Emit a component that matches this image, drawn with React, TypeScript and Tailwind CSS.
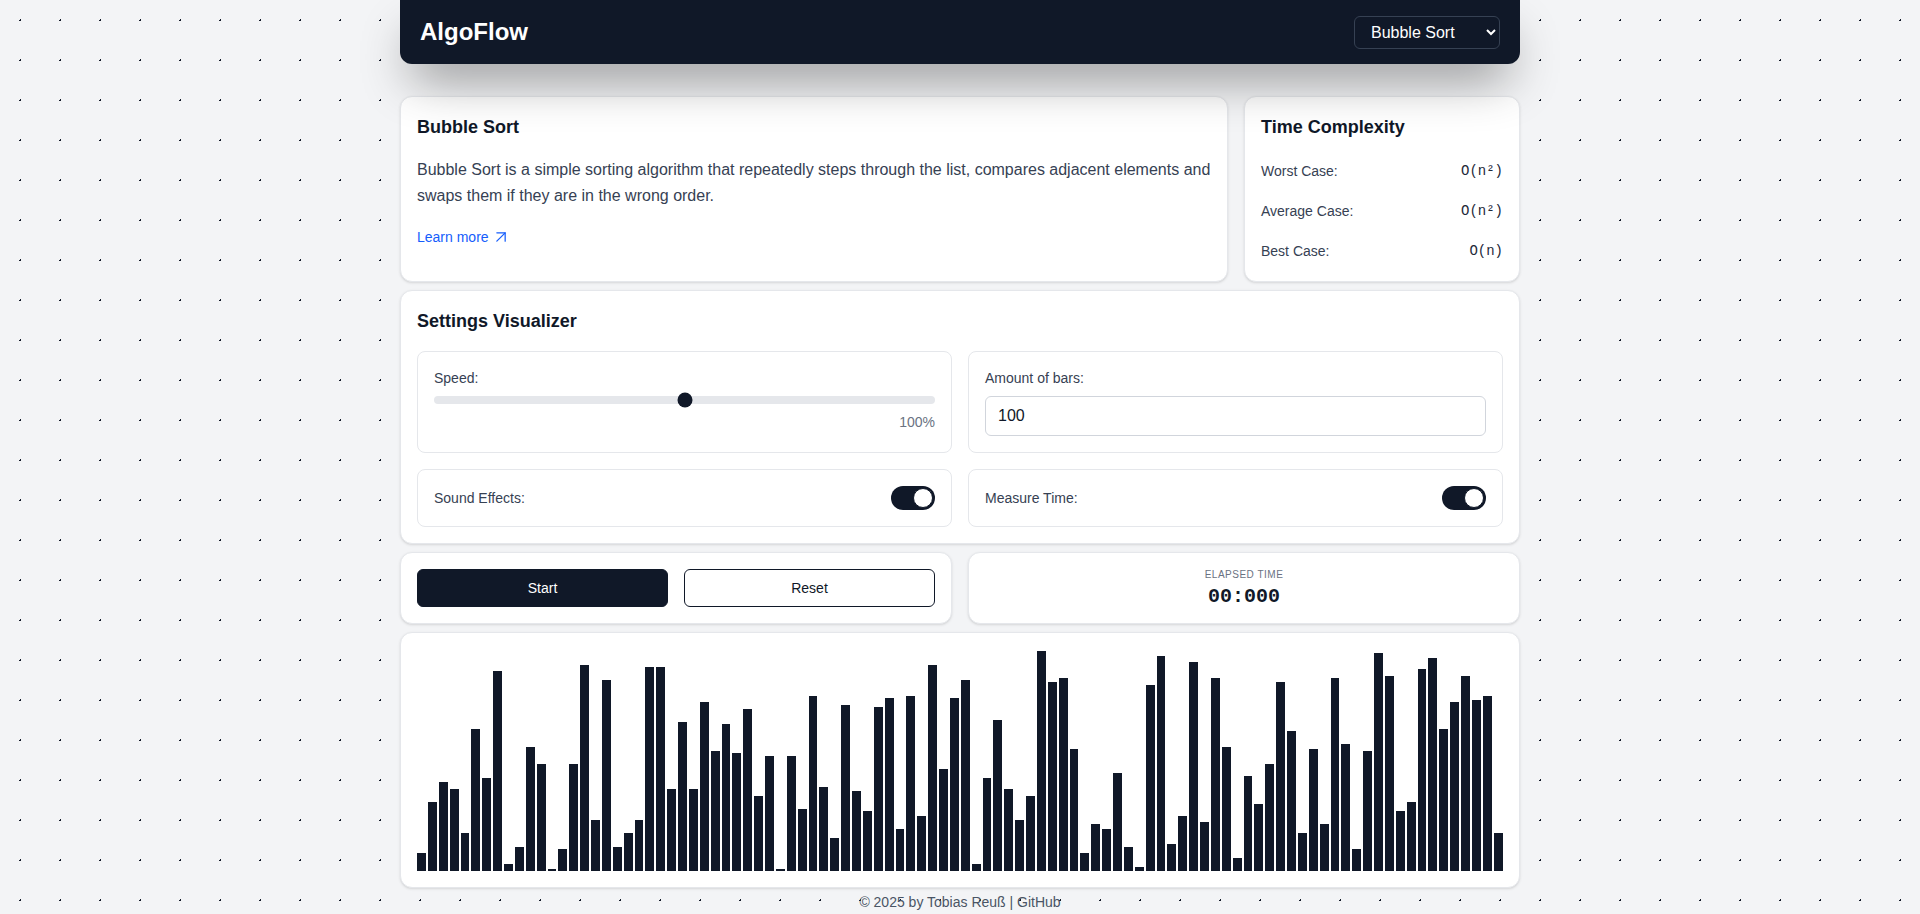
import React, { useState } from "react";
import { ArrowUpRight } from "lucide-react";

// bar heights in px, read off the current (unsorted) array
const bars: number[] = [
  18, 69, 89, 82, 38, 142, 93, 200, 7, 24, 124, 107, 2, 22, 107, 206, 51, 191, 24, 38,
  51, 204, 204, 82, 149, 82, 169, 120, 147, 118, 162, 75, 115, 2, 115, 62, 175, 84, 33, 166,
  80, 60, 164, 173, 42, 175, 55, 206, 102, 173, 191, 7, 93, 151, 82, 51, 75, 220, 189, 193,
  122, 18, 47, 42, 98, 24, 4, 186, 215, 27, 55, 209, 49, 193, 124, 13, 95, 67, 107, 189,
  140, 38, 122, 47, 193, 127, 22, 120, 218, 195, 60, 69, 202, 213, 142, 169, 195, 171, 175, 38,
];

const complexity = [
  { label: "Worst Case:", value: "O(n²)" },
  { label: "Average Case:", value: "O(n²)" },
  { label: "Best Case:", value: "O(n)" },
];

const Toggle: React.FC<{ on: boolean; onChange: () => void }> = ({ on, onChange }) => (
  <button
    onClick={onChange}
    className={`relative h-6 w-11 rounded-full transition-colors ${on ? "bg-gray-900" : "bg-gray-300"}`}
  >
    <span
      className={`absolute top-0.5 left-0.5 h-5 w-5 rounded-full border border-gray-900 bg-white transition-transform ${
        on ? "translate-x-5" : "translate-x-0"
      }`}
    />
  </button>
);

const App: React.FC = () => {
  const [algo, setAlgo] = useState("bubble");
  const [amount, setAmount] = useState("100");
  const [sound, setSound] = useState(true);
  const [measure, setMeasure] = useState(true);

  return (
    <div className="min-h-screen bg-gray-100 bg-[radial-gradient(circle_at_20.5px_20.5px,#111827_1px,transparent_1px)] bg-[length:40px_40px] font-['Liberation_Sans',Arial,sans-serif]">
      <div className="mx-auto flex max-w-6xl flex-col px-4">
        {/* Header */}
        <header className="relative z-10 flex h-16 items-center justify-between rounded-b-xl bg-gray-900 px-5 shadow-[0_25px_50px_-12px_rgba(0,0,0,0.45)]">
          <h1 className="text-2xl font-bold text-white">AlgoFlow</h1>
          <select
            value={algo}
            onChange={(e) => setAlgo(e.target.value)}
            className="w-[146px] rounded-md border border-gray-700 bg-gray-900 py-1.5 pl-3 pr-2 text-base text-white"
          >
            <option value="bubble">Bubble Sort</option>
            <option value="selection">Selection Sort</option>
            <option value="insertion">Insertion Sort</option>
            <option value="merge">Merge Sort</option>
            <option value="quick">Quick Sort</option>
          </select>
        </header>

        <main className="mt-8 flex flex-col gap-2">
          {/* Info + complexity */}
          <div className="grid grid-cols-[3fr_1fr] gap-4">
            <section className="rounded-xl border border-gray-200 bg-white p-4 shadow-sm">
              <h2 className="mb-4 text-lg font-semibold text-gray-900">Bubble Sort</h2>
              <p className="text-base leading-relaxed text-gray-700">
                Bubble Sort is a simple sorting algorithm that repeatedly steps through the list, compares adjacent
                elements and swaps them if they are in the wrong order.
              </p>
              <a href="#" className="mt-[18px] inline-flex items-center gap-0.5 text-sm text-blue-600">
                Learn more
                <ArrowUpRight size={20} strokeWidth={1.5} />
              </a>
            </section>

            <section className="rounded-xl border border-gray-200 bg-white p-4 shadow-sm">
              <h2 className="mb-4 text-lg font-semibold text-gray-900">Time Complexity</h2>
              <div className="space-y-3">
                {complexity.map((c) => (
                  <div key={c.label} className="flex items-center justify-between py-1 text-sm">
                    <span className="text-gray-700">{c.label}</span>
                    <span className="font-['Liberation_Mono',monospace] text-gray-800">{c.value}</span>
                  </div>
                ))}
              </div>
            </section>
          </div>

          {/* Settings */}
          <section className="rounded-xl border border-gray-200 bg-white p-4 shadow-sm">
            <h2 className="mb-4 text-lg font-semibold text-gray-900">Settings Visualizer</h2>
            <div className="grid grid-cols-2 gap-4">
              <div className="rounded-lg border border-gray-200 p-4">
                <div className="mb-2 text-sm text-gray-700">Speed:</div>
                <div className="relative h-2 rounded-full bg-gray-200">
                  <div className="absolute top-1/2 left-1/2 h-[15px] w-[15px] -translate-x-1/2 -translate-y-1/2 rounded-full bg-gray-900" />
                </div>
                <div className="mt-2 text-right text-sm text-gray-500">100%</div>
              </div>

              <div className="rounded-lg border border-gray-200 p-4">
                <div className="mb-2 text-sm text-gray-700">Amount of bars:</div>
                <input
                  value={amount}
                  onChange={(e) => setAmount(e.target.value)}
                  className="h-10 w-full rounded-md border border-gray-300 px-3 text-base text-gray-900"
                />
              </div>

              <div className="flex items-center justify-between rounded-lg border border-gray-200 p-4">
                <span className="text-sm text-gray-700">Sound Effects:</span>
                <Toggle on={sound} onChange={() => setSound(!sound)} />
              </div>

              <div className="flex items-center justify-between rounded-lg border border-gray-200 p-4">
                <span className="text-sm text-gray-700">Measure Time:</span>
                <Toggle on={measure} onChange={() => setMeasure(!measure)} />
              </div>
            </div>
          </section>

          {/* Controls + timer */}
          <div className="grid grid-cols-2 gap-4">
            <section className="flex gap-4 rounded-xl border border-gray-200 bg-white p-4 shadow-sm">
              <button className="flex-1 rounded-md border border-gray-900 bg-gray-900 py-2 text-sm text-white">Start</button>
              <button className="flex-1 rounded-md border border-gray-900 bg-white py-2 text-sm text-gray-900">Reset</button>
            </section>
            <section className="flex flex-col items-center justify-center rounded-xl border border-gray-200 bg-white px-4 pt-[14px] pb-[10px] shadow-sm">
              <div className="text-[10px] leading-none uppercase tracking-wider text-gray-500">Elapsed Time</div>
              <div className="mt-[3px] font-['Liberation_Mono',monospace] text-xl leading-7 font-bold text-gray-900">00:000</div>
            </section>
          </div>

          {/* Bars */}
          <section className="rounded-xl border border-gray-200 bg-white p-4 shadow-sm">
            <div className="flex h-[222px] items-end gap-0.5">
              {bars.map((h, i) => (
                <div key={i} className="flex-1 bg-gray-900" style={{ height: h }} />
              ))}
            </div>
          </section>
        </main>

        <footer className="mt-1 pb-4 text-center text-sm text-gray-600">© 2025 by Tobias Reuß | GitHub</footer>
      </div>
    </div>
  );
};

export default App;
